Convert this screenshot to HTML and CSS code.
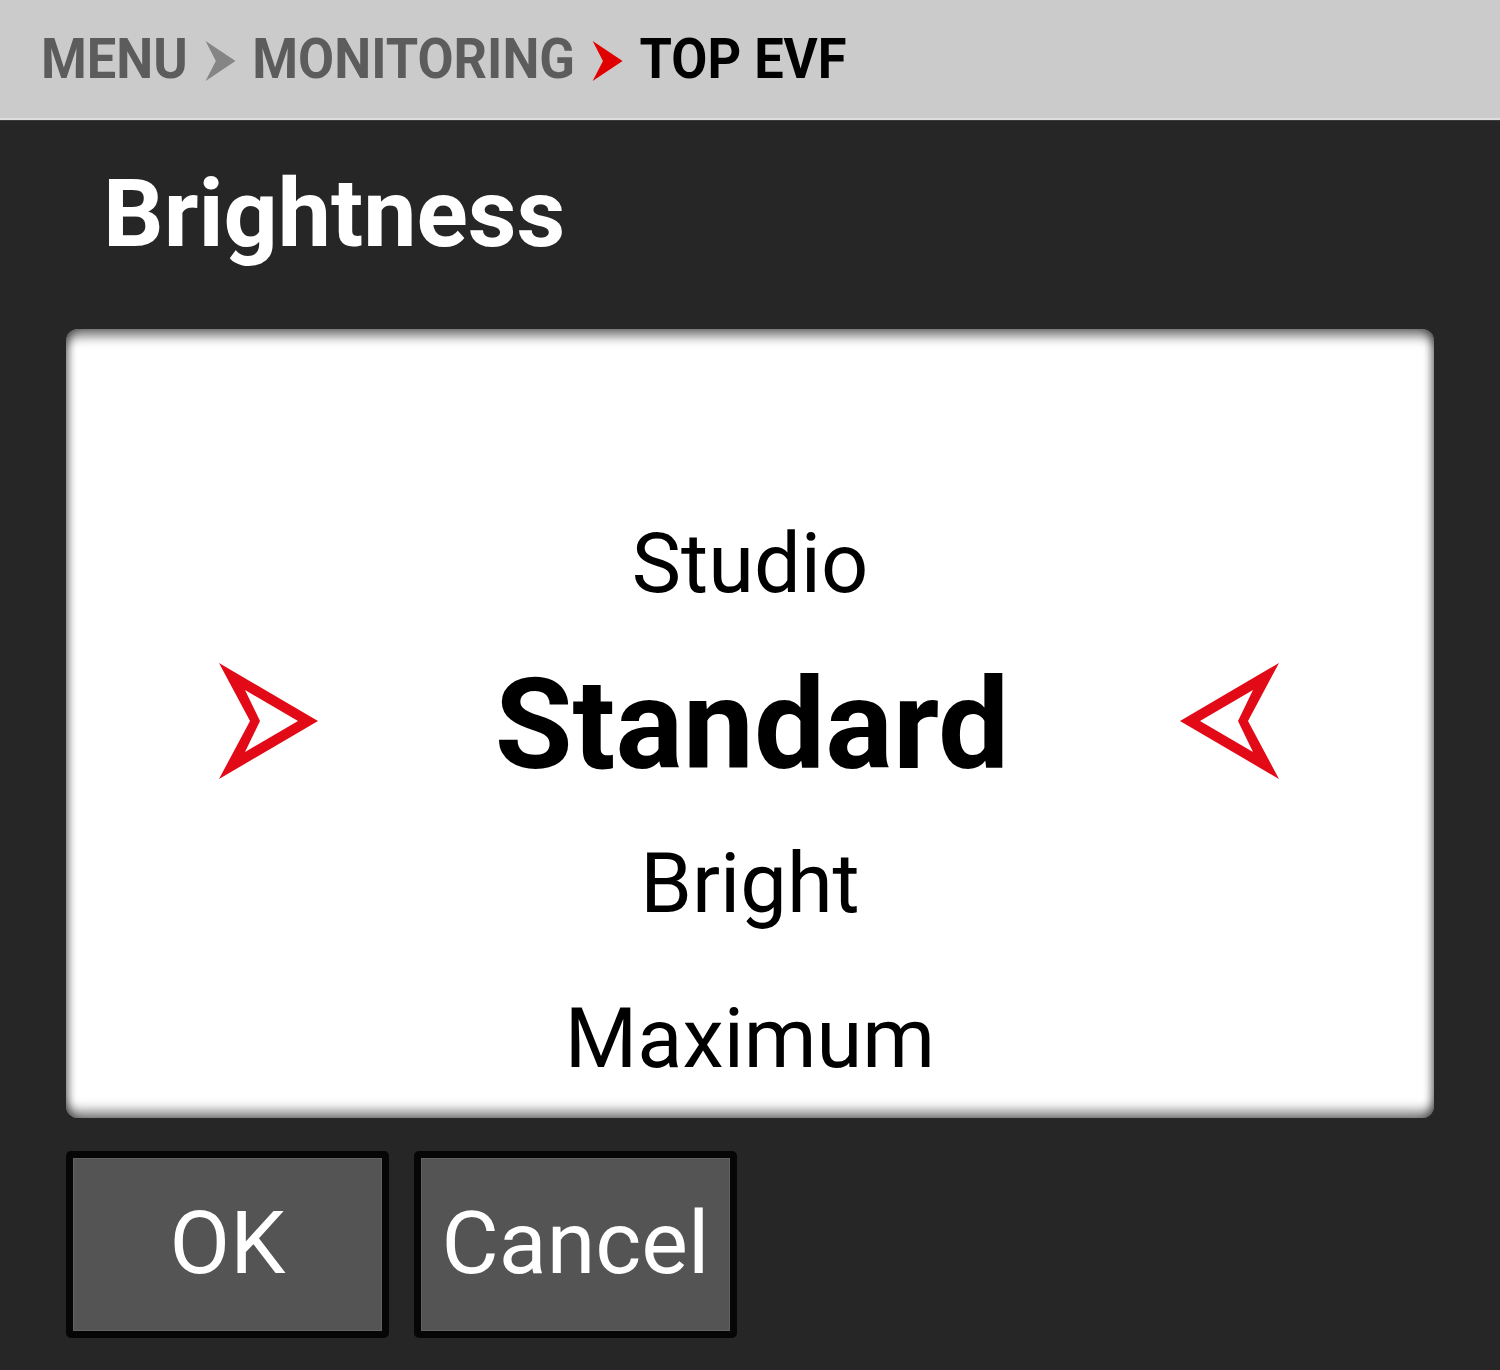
FILE: index.html
```html
<!DOCTYPE html>
<html lang="en">
<head>
<meta charset="utf-8">
<title>Brightness</title>
<link rel="stylesheet" href="styles.css">
</head>
<body>
<header class="crumbbar">
  <nav class="crumbs">
    <span class="crumb crumb-past">MENU</span>
    <svg class="sep" viewBox="0 0 32 40" aria-hidden="true"><polygon points="0,0 32,20 0,40 11,20" fill="#858585"/></svg>
    <span class="crumb crumb-past">MONITORING</span>
    <svg class="sep" viewBox="0 0 32 40" aria-hidden="true"><polygon points="0,0 32,20 0,40 11,20" fill="#e00000"/></svg>
    <span class="crumb crumb-current">TOP EVF</span>
  </nav>
</header>
<main class="screen">
  <h1 class="title">Brightness</h1>
  <section class="picker">
    <div class="option">Studio</div>
    <div class="option-row">
      <svg class="marker" viewBox="0 0 100 116" aria-hidden="true"><path fill-rule="evenodd" fill="#e30a17" d="M1,0 L100,58 L1,116 L32,58 Z M27,27 L42,58 L27,89 L80,58 Z"/></svg>
      <div class="option option-selected">Standard</div>
      <svg class="marker" viewBox="0 0 100 116" aria-hidden="true"><path fill-rule="evenodd" fill="#e30a17" d="M99,0 L0,58 L99,116 L68,58 Z M73,27 L58,58 L73,89 L20,58 Z"/></svg>
    </div>
    <div class="option option-bright">Bright</div>
    <div class="option option-max">Maximum</div>
  </section>
  <div class="actions">
    <button class="btn">OK</button>
    <button class="btn">Cancel</button>
  </div>
</main>
</body>
</html>
```
FILE: styles.css
```css
html, body {
  margin: 0;
  padding: 0;
}
body {
  width: 1500px;
  height: 1370px;
  background: #262626;
  font-family: Roboto, "Liberation Sans", sans-serif;
  overflow: hidden;
}
.crumbbar {
  height: 118px;
  background: #cbcbcb;
  border-bottom: 2px solid #dedede;
  box-shadow: 0 1px 0 #3a3a3a;
  display: flex;
  align-items: center;
  padding-left: 41px;
}
.crumbs {
  display: flex;
  align-items: center;
  transform: scaleX(0.935);
  transform-origin: left center;
  font-weight: 700;
  font-size: 56px;
  line-height: 114px;
  white-space: nowrap;
}
.crumb-past { color: #5c5c5c; }
.crumb-current { color: #000; }
.sep {
  width: 36px;
  height: 40px;
  margin: 4px 16px 0 17px;
}
.screen {
  padding: 0 66px;
}
.title {
  margin: 34px 0 0 37px;
  font-size: 95px;
  line-height: 120px;
  font-weight: 700;
  color: #fff;
}
.picker {
  margin-top: 55px;
  height: 789px;
  box-sizing: border-box;
  padding-top: 185px;
  background: #fff;
  border-radius: 12px;
  box-shadow:
    inset 0 12px 12px -5px rgba(0,0,0,0.55),
    inset 0 -12px 12px -5px rgba(0,0,0,0.5),
    inset 8px 0 9px -5px rgba(0,0,0,0.4),
    inset -8px 0 9px -5px rgba(0,0,0,0.4);
  display: flex;
  flex-direction: column;
  align-items: center;
}
.option {
  font-size: 83px;
  line-height: 100px;
  color: #000;
  text-align: center;
}
.option-row {
  align-self: stretch;
  display: flex;
  align-items: center;
  justify-content: space-between;
  padding: 0 154px 0 152px;
  margin-top: 36px;
}
.option-selected {
  font-size: 126.5px;
  line-height: 150px;
  font-weight: 700;
  padding-left: 6px;
}
.marker {
  width: 100px;
  height: 116px;
  margin-bottom: 8px;
}
.option-bright { margin-top: 34px; }
.option-max { margin-top: 55px; }
.actions {
  display: flex;
  gap: 25px;
  margin-top: 33px;
}
.btn {
  width: 323px;
  height: 187px;
  box-sizing: border-box;
  border: 7px solid #060606;
  border-radius: 5px;
  background: #545454;
  box-shadow: inset 0 0 0 1px #626262;
  color: #fff;
  font-family: Roboto, "Liberation Sans", sans-serif;
  font-size: 88px;
  line-height: 1;
  padding: 0 0 4px 0;
}
```
